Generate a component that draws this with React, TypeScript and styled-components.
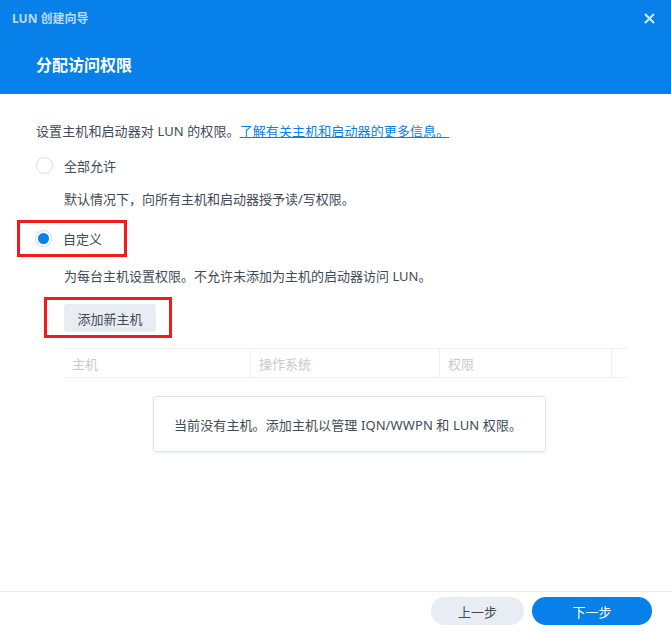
import styled, { createGlobalStyle } from "styled-components";

const GlobalStyle = createGlobalStyle`
  html, body {
    margin: 0;
    padding: 0;
    background: #fff;
  }
  * {
    box-sizing: border-box;
  }
`;

const Dialog = styled.div`
  width: 671px;
  height: 632px;
  display: flex;
  flex-direction: column;
  font-family: "Noto Sans", "Noto Sans CJK SC", sans-serif;
  font-size: 13px;
  color: #414b55;
  background: #fff;
`;

const Header = styled.header`
  background: #0780ea;
  height: 94px;
  display: flex;
  flex-direction: column;
`;

const TitleBar = styled.div`
  height: 36px;
  padding: 0 16px 0 12px;
  display: flex;
  justify-content: space-between;
  align-items: center;
`;

const WindowTitle = styled.div`
  color: rgba(255, 255, 255, 0.72);
  font-size: 12px;
  font-weight: bold;
`;

const CloseButton = styled.div`
  color: rgba(255, 255, 255, 0.8);
  display: flex;
  align-items: center;
  cursor: pointer;
`;

const StepTitle = styled.h1`
  color: #fff;
  font-size: 16px;
  font-weight: bold;
  margin: 0;
  padding: 16px 0 0 36px;
`;

const Body = styled.div`
  flex: 1;
  padding: 28px 43px 0 36px;
  display: flex;
  flex-direction: column;
`;

const Intro = styled.p`
  margin: 0;
  line-height: 18px;
  color: #414b55;
  letter-spacing: 0.1px;
`;

const Link = styled.a`
  color: #0780ea;
  text-decoration: underline;
  cursor: pointer;
`;

const RadioRow = styled.div<{ $top: number }>`
  display: flex;
  align-items: center;
  gap: 11px;
  margin-top: ${(p) => p.$top}px;
  height: 20px;
`;

const Highlight = styled.div<{ $left: number; $top: number; $pad: string }>`
  display: inline-flex;
  align-self: flex-start;
  border: 3px solid #f21a1a;
  margin: ${(p) => p.$top}px 0 0 ${(p) => p.$left}px;
  padding: ${(p) => p.$pad};
`;

const RadioCircle = styled.span<{ $checked?: boolean }>`
  width: 17px;
  height: 17px;
  border-radius: 50%;
  border: 1px solid ${(p) => (p.$checked ? "#c9def3" : "#d5dde6")};
  background: #fff;
  display: flex;
  align-items: center;
  justify-content: center;
  flex-shrink: 0;

  &::after {
    content: "";
    width: 11px;
    height: 11px;
    border-radius: 50%;
    background: ${(p) => (p.$checked ? "#0780ea" : "transparent")};
  }
`;

const Label = styled.span`
  color: #414b55;
`;

const Hint = styled.p<{ $top: number }>`
  margin: ${(p) => p.$top}px 0 0 28px;
  line-height: 18px;
  color: #414b55;
`;

const SecondaryButton = styled.button`
  font-family: inherit;
  font-size: 13px;
  color: #414b55;
  background: #e8edf3;
  border: none;
  border-radius: 3px;
  height: 28px;
  width: 92px;
  padding: 0;
  cursor: pointer;
`;

const Table = styled.div`
  margin: 10px 0 0 28px;
  border-top: 1px solid #eef0f2;
  border-bottom: 1px solid #eef0f2;
  display: grid;
  grid-template-columns: 187px 189px 172px 1fr;
  height: 30px;
`;

const HeadCell = styled.div<{ $last?: boolean }>`
  display: flex;
  align-items: center;
  padding-left: 8px;
  color: #c6cacf;
  border-right: ${(p) => (p.$last ? "none" : "1px solid #f0f1f3")};
`;

const EmptyWrap = styled.div`
  display: flex;
  margin-top: 18px;
  padding-left: 117px;
`;

const EmptyNotice = styled.div`
  width: 393px;
  height: 56px;
  border: 1px solid #dfe4ea;
  border-radius: 3px;
  box-shadow: 0 1px 3px rgba(0, 0, 0, 0.08);
  display: flex;
  align-items: center;
  padding-left: 20px;
  color: #414b55;
  letter-spacing: 0.1px;
`;

const Footer = styled.footer`
  height: 41px;
  border-top: 1px solid #e6e9ed;
  display: flex;
  justify-content: flex-end;
  align-items: center;
  gap: 8px;
  padding: 0 19px 2px 0;
`;

const PillButton = styled.button<{ $primary?: boolean }>`
  font-family: inherit;
  font-size: 13px;
  height: 28px;
  border: none;
  border-radius: 14px;
  width: ${(p) => (p.$primary ? 120 : 93)}px;
  background: ${(p) => (p.$primary ? "#0780ea" : "#e8edf3")};
  color: ${(p) => (p.$primary ? "#fff" : "#414b55")};
  cursor: pointer;
`;

const App = () => {
  return (
    <>
      <GlobalStyle />
      <Dialog>
        <Header>
          <TitleBar>
            <WindowTitle>LUN 创建向导</WindowTitle>
            <CloseButton>
              <svg width="11" height="11" viewBox="0 0 11 11">
                <path d="M1 1 L10 10 M10 1 L1 10" stroke="currentColor" strokeWidth="2.2" />
              </svg>
            </CloseButton>
          </TitleBar>
          <StepTitle>分配访问权限</StepTitle>
        </Header>
        <Body>
          <Intro>
            设置主机和启动器对 LUN 的权限。<Link>了解有关主机和启动器的更多信息。</Link>
          </Intro>
          <RadioRow $top={15}>
            <RadioCircle />
            <Label>全部允许</Label>
          </RadioRow>
          <Hint $top={15}>默认情况下，向所有主机和启动器授予读/写权限。</Hint>
          <Highlight $left={-19} $top={12} $pad="5px 22px 6px 15px">
            <RadioRow $top={0}>
              <RadioCircle $checked />
              <Label>自定义</Label>
            </RadioRow>
          </Highlight>
          <Hint $top={10}>为每台主机设置权限。不允许未添加为主机的启动器访问 LUN。</Hint>
          <Highlight $left={8} $top={12} $pad="4px 13px 3px 17px">
            <SecondaryButton>添加新主机</SecondaryButton>
          </Highlight>
          <Table>
            <HeadCell>主机</HeadCell>
            <HeadCell>操作系统</HeadCell>
            <HeadCell>权限</HeadCell>
            <HeadCell $last />
          </Table>
          <EmptyWrap>
            <EmptyNotice>当前没有主机。添加主机以管理 IQN/WWPN 和 LUN 权限。</EmptyNotice>
          </EmptyWrap>
        </Body>
        <Footer>
          <PillButton>上一步</PillButton>
          <PillButton $primary>下一步</PillButton>
        </Footer>
      </Dialog>
    </>
  );
};

export default App;
